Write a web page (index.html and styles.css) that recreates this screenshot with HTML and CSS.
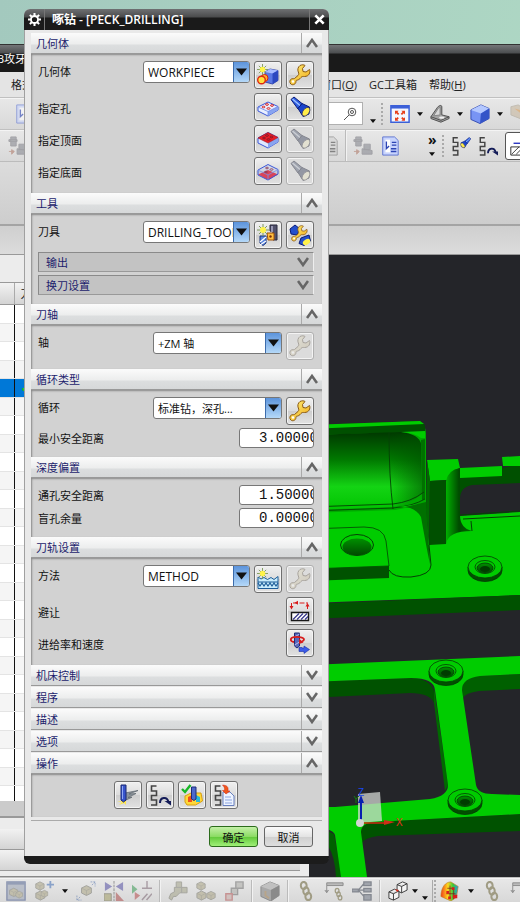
FILE: index.html
```
<!DOCTYPE html>
<html lang="zh-CN">
<head>
    <meta charset="UTF-8" />
    <meta name="viewport" content="width=device-width, initial-scale=1.0" />
    <title>啄钻 - [PECK_DRILLING]</title>
    <link rel="stylesheet" href="styles.css">
</head>
<body>

<!-- Icons -->
<svg class="sprite" aria-hidden="true">
    <defs>
        <linearGradient id="gold" x1="0" y1="0" x2="1" y2="1">
            <stop offset="0" stop-color="#fff27a" /><stop offset="1" stop-color="#f0a818" />
        </linearGradient>
        <linearGradient id="rainbow" x1="0" y1="0" x2="1" y2="0">
            <stop offset="0" stop-color="#f23a1c" /><stop offset=".4" stop-color="#ffd81c" />
            <stop offset=".7" stop-color="#38c838" /><stop offset="1" stop-color="#2898e8" />
        </linearGradient>
    </defs>
    <symbol id="up" viewBox="0 0 12 10"><path d="M1 9 6 2l5 7" fill="none" stroke="#666" stroke-width="2.600" /></symbol>
    <symbol id="down" viewBox="0 0 12 10"><path d="M1 1l5 7 5-7" fill="none" stroke="#666" stroke-width="2.600" /></symbol>
    <symbol id="tri" viewBox="0 0 8 5"><path d="M0 0h8L4 5z" fill="#111" /></symbol>
    <symbol id="star" viewBox="0 0 12 12">
        <path d="M6 0v12M0 6h12M2 2l8 8M10 2l-8 8" stroke="#7c9a58" stroke-width="1" />
        <circle cx="6" cy="6" r="3" fill="#fff34a" />
    </symbol>
    <symbol id="wrench" viewBox="0 0 22 22">
        <path d="M11 1.500c2-1 4-.8 5 0l-2.500 3 .5 3 3 .5 3.500-2.500c1.200 3-.5 7-5 7-1.500 0-2.500-.3-3.500 1-1.500 2-3 2.500-4.500 2.800-.5 0-.5 1.200-.7 2.200-.5 2-3.500 3-5 1.500s-1.300-4.500 1-5.200c1-.3 2 .2 2.700-.3L9 11.500c1-1 1-2 .3-3.500C8.300 5.500 9 3 11 1.500z" fill="url(#gold)" stroke="#8a5a14" />
        <circle cx="4" cy="17.500" r="1.200" fill="#fff" />
    </symbol>
    <symbol id="torch" viewBox="0 0 22 22">
        <path d="M2 3.500 5 1l8 6.500-4 5.500z" fill="#2d5ce0" stroke="#0a1c78" />
        <path d="M3.500 3 11 9.500" stroke="#9cc0ff" stroke-width="1.500" />
        <path d="M9 12.500 13 7.500l7.500 3.500-.5 7-6 2.500z" fill="#1a44cc" stroke="#0a1c78" />
        <ellipse cx="17" cy="15.800" rx="3" ry="5" transform="rotate(38 17 15.800)" fill="#ffec4a" stroke="#3a3a60" stroke-width=".8" />
    </symbol>
    <symbol id="newgeom" viewBox="0 0 22 22">
        <path d="M8 8l5-3 8 1.500v10L15.500 20 8 18z" fill="#5a78e4" stroke="#2436a0" stroke-width=".8" />
        <path d="M8 8l5-3 8 1.500-5.500 3z" fill="#a8bcff" /><path d="M15.500 9.500 21 6.500v10L15.500 20z" fill="#2c48c0" />
        <circle cx="7.500" cy="14" r="3.500" fill="#ffb02a" stroke="#d82010" /><circle cx="4.500" cy="16" r="3.800" fill="#ffe040" stroke="#e02810" stroke-width="1.400" />
        <use href="#star" x="0" y="0" width="11" height="11" />
    </symbol>
    <symbol id="slab" viewBox="0 0 22 22">
        <path d="M1 11 11 6l10 4.500V14l-10 6L1 15z" fill="#e8efff" stroke="#3c58d8" />
        <path d="M11 15.500 21 10.500V14l-10 6z" fill="#88a4f0" />
        <path d="M1 11l10 4.500 10-5M11 15.500V20" fill="none" stroke="#6c88e8" stroke-width=".8" />
        <g fill="#fff" stroke="#d82020"><ellipse cx="10" cy="8.500" rx="1.500" ry=".8" /><ellipse cx="15" cy="9.500" rx="1.500" ry=".8" /><ellipse cx="6.500" cy="11" rx="1.500" ry=".8" /><ellipse cx="11.500" cy="12.500" rx="1.500" ry=".8" /></g>
    </symbol>
    <symbol id="slabtop" viewBox="0 0 22 22">
        <path d="M1 10 11 4.500l10 5V14l-10 6L1 15z" fill="#dfe8ff" stroke="#3c58d8" />
        <path d="M11 15 21 9.500V14l-10 6z" fill="#88a4f0" />
        <path d="M1 10 11 4.500l10 5L11 15z" fill="#e81c24" stroke="#a01020" stroke-width=".6" />
        <g fill="none" stroke="#781828" stroke-width=".8"><ellipse cx="10" cy="7.500" rx="1.500" ry=".8" /><ellipse cx="14.500" cy="9" rx="1.500" ry=".8" /><ellipse cx="7" cy="10" rx="1.500" ry=".8" /><ellipse cx="11.500" cy="11.500" rx="1.500" ry=".8" /></g>
    </symbol>
    <symbol id="slabbottom" viewBox="0 0 22 22">
        <path d="M1 14.500 11 10l10 4.500L11 20z" fill="#ea1c24" />
        <path d="M1 10 11 4.500l10 5V14l-10 6L1 15z" fill="#a8bcf8" fill-opacity=".25" stroke="#3c58d8" />
        <path d="M1 10l10 5 10-5.500M11 15v5" fill="none" stroke="#7890e8" stroke-width=".8" />
        <g fill="none" stroke="#883858" stroke-width=".8"><ellipse cx="10" cy="8" rx="1.500" ry=".8" /><ellipse cx="14.500" cy="9.500" rx="1.500" ry=".8" /><ellipse cx="9" cy="12" rx="1.500" ry=".8" /></g>
    </symbol>
    <symbol id="newtool" viewBox="0 0 22 22">
        <path d="M3 12h6v7l-3 2.500L3 19z" fill="#5c88e0" stroke="#14307c" /><path d="M3 18l6-5M3 21l6-4" stroke="#fff" stroke-width="1.200" />
        <path d="M13 1h7v15h-4V8l-3-1z" fill="#50506c" stroke="#28283c" /><path d="M15 2v6" stroke="#b0b0cc" stroke-width="1.500" />
        <path d="M10 9h7v7h-6z" fill="#ffc040" stroke="#a05008" /><circle cx="13.500" cy="12.500" r="1.200" fill="#7c2c08" />
        <use href="#star" x="0" y="0" width="12" height="12" />
    </symbol>
    <symbol id="edittool" viewBox="0 0 22 22">
        <path d="M1 5l5-4 5 4-3 6-6-1z" fill="#2450cc" stroke="#0a1c78" />
        <path d="M12 14l8-3 1.500 6-6.500 4.500-5-2z" fill="#2450cc" stroke="#0a1c78" /><ellipse cx="17.500" cy="18" rx="4" ry="2.500" transform="rotate(-30 17.500 18)" fill="#fff14a" />
        <use href="#wrench" x="2" y="0" width="17" height="19" />
    </symbol>
    <symbol id="newmethod" viewBox="0 0 22 22">
        <path d="M1 20.500V9l3 2 3-1.500 3.500 2L14 9.500l3 2 4-3v12z" fill="#c8ecfc" stroke="#1c5c98" />
        <path d="M1 14h20M1 15l2 3 2-3 2 3 2-3 2 3 2-3 2 3 2-3 2 3 2-3" fill="none" stroke="#1c5c98" stroke-width="1.200" />
        <use href="#star" x="0" y="0" width="11" height="11" />
    </symbol>
    <symbol id="avoid" viewBox="0 0 22 22">
        <path d="M2.500 8V3H19M18.500 4v6" fill="none" stroke="#d81c1c" stroke-dasharray="5 1.500" />
        <path d="M.5 6h4L2.500 9.500zM9 .8v4L5.500 2.800zM16.500 6.500h4L18.500 3z" fill="#d81c1c" />
        <path d="M2.500 12.500h17v8h-17z" fill="#fff" stroke="#181818" stroke-width="1.400" />
        <path d="M4 19.500 10 13.500M8 19.500l6-6M12 19.500l6-6M16 19.500l3-3" stroke="#38388c" stroke-width="1.200" />
    </symbol>
    <symbol id="feed" viewBox="0 0 22 22">
        <path d="M5.500 1h5v13l-2.500 2-2.500-2z" fill="#5868bc" stroke="#202c74" /><path d="M5.500 5l5-3M5.500 13l5-3" stroke="#b4bcec" />
        <path d="M5 10C1 9.500.5 6 5 5.200c5-.8 10 .3 10 2.300 0 1-1 1.500-2 2" fill="none" stroke="#d81c1c" stroke-width="1.800" /><path d="M10 6.500v5.500l4.500-1.500z" fill="#d81c1c" />
        <path d="M10 15.500v4h5v2l5.500-4-5.500-3.500v2h-2v-.5z" fill="#3c5ce8" stroke="#1830a8" stroke-width=".6" />
    </symbol>
    <symbol id="path" viewBox="0 0 22 22">
        <path d="M7.500 2H2.500v5h5v4.500h-5v4.500h5V21H2" fill="none" stroke="#444" stroke-width="1.600" />
    </symbol>
    <symbol id="generate" viewBox="0 0 22 22">
        <use href="#path" width="22" height="22" />
        <path d="M11 19c0-6 7-7 8.500-1" fill="none" stroke="#141c58" stroke-width="2" /><path d="M15.500 17h6.500v4.500z" fill="#141c58" />
    </symbol>
    <symbol id="replay" viewBox="0 0 22 22">
        <path d="M8 9l13-2.500-9 3.500 7-.5-8 4 4-.3-7 3.300z" fill="#8c949c" stroke="#5c646c" stroke-width=".7" />
        <path d="M0 17l5 1-3 3 5-2 2 2v-4z" fill="#ffe648" />
        <path d="M4 1h5v15l-2.500 2L4 16z" fill="#3854cc" stroke="#182870" /><path d="M5.500 2v13" stroke="#90a8f4" />
    </symbol>
    <symbol id="verify" viewBox="0 0 22 22">
        <path d="M4 12l6-3h10l1.500 8-7 4H6l-2-3z" fill="#ffd838" stroke="#d8a010" />
        <path d="M7 13l4-2v7H7z" fill="#f0501c" /><path d="M15 11l4 2v5h-4z" fill="#28b8d8" />
        <path d="M10.500 3h4.500v12l-2 1.500-2.500-1.500z" fill="#4c68cc" stroke="#1c2c78" />
        <path d="M1 5l3 3 5.500-7" fill="none" stroke="#18b828" stroke-width="2.400" />
    </symbol>
    <symbol id="list" viewBox="0 0 22 22">
        <use href="#path" width="22" height="22" />
        <path d="M10 8h7l4 4v9.500H10z" fill="#eef4ff" stroke="#6880c0" /><path d="M12 13h6M12 16h7M12 19h7" stroke="#8ca4e0" />
        <path d="M9.500 1c5 .5 6 2 5.500 6h2L13 10 9.500 6.500h2C12 4 11 2.500 9.500 1z" fill="#f0581c" stroke="#d02010" stroke-width=".5" />
    </symbol>
    <symbol id="cube" viewBox="0 0 22 22">
        <path d="M1 6.500 12 1l9 4v11l-10 5.500L1 17z" fill="#7894f4" stroke="#3048b0" /><path d="M1 6.500 12 1l9 4-9 5.500z" fill="#b4c8ff" /><path d="M12 10.500 21 5v11l-10 5.500z" fill="#3454c8" />
    </symbol>
    <symbol id="graycube" viewBox="0 0 22 22">
        <path d="M1 6 11 1l10 4v11l-9 6-11-5z" fill="#a8a8a8" stroke="#888" /><path d="M1 6 11 1l10 4-9 5z" fill="#c0c0c0" /><path d="M12 10 21 5v11l-9 6z" fill="#8a8a8a" /><path d="M6 11v5l4 3" stroke="#b8a488" stroke-width="2" fill="none" />
    </symbol>
    <symbol id="fit" viewBox="0 0 22 22">
        <path d="M1 2h20v18H1z" fill="#f4f7ff" stroke="#3c60d8" stroke-width="1.600" /><path d="M1 2h20v3H1z" fill="#3c60d8" />
        <path d="M5.500 7.500h4l-1.300 1.300 2 2-1.400 1.400-2-2-1.300 1.300zM16.500 7.500h-4l1.300 1.300-2 2 1.400 1.400 2-2 1.300 1.300zM5.500 18.500h4l-1.300-1.300 1.500-1.500-1.400-1.400-1.500 1.500-1.300-1.300zM16.500 18.500h-4l1.300-1.300-1.500-1.500 1.400-1.400 1.500 1.500 1.300-1.300z" fill="#e8401c" />
    </symbol>
    <symbol id="orient" viewBox="0 0 22 22">
        <path d="M1 14 8 4c2-3 5-3 5-1v9l8 2v2l-9 4-11-4z" fill="#a4a4a4" stroke="#484848" /><path d="M4 13 9 5l2-2v9z" fill="#d8d8d8" stroke="#686868" stroke-width=".7" /><path d="M1 14l11 4 9-4" fill="none" stroke="#484848" /><ellipse cx="13" cy="15" rx="3" ry="1.200" fill="#eee" />
    </symbol>
    <symbol id="doc" viewBox="0 0 22 22">
        <path d="M3 1h13l4 4v16H3z" fill="#c8d4fc" stroke="#5870d0" /><path d="M6 4h5v14H6z" fill="#fff" /><path d="M7 6v8l3-3M13 7h5M13 10h5M12 14h6M12 17h6" stroke="#2c44b4" stroke-width="1.500" fill="none" />
    </symbol>
    <symbol id="tools" viewBox="0 0 22 22">
        <path d="M3 1h6v10H3zM1 4h9v2H1zM12 9h7v6h-7zM10 14l11 2v4H10z" fill="#8a8c94" stroke="#787880" /><path d="M1 17h5M4 15l3 2-3 3z" fill="#b07c6c" stroke="#b07c6c" />
    </symbol>
    <symbol id="section" viewBox="0 0 22 22">
        <path d="M1 3l8-2 12 8v11L1 12z" fill="#c8b8a0" stroke="#a8a090" /><path d="M5 5l16 12V9z" fill="#d89850" />
    </symbol>
    <symbol id="pathtorch" viewBox="0 0 22 22">
        <use href="#path" width="22" height="22" /><g transform="matrix(-1 0 0 1 23 1)"><use href="#torch" width="13" height="13" /></g>
    </symbol>
    <symbol id="hatch" viewBox="0 0 22 22">
        <path d="M5 8h17" stroke="#2430c0" stroke-width="1.500" /><path d="M2 12h20v9H2z" fill="#fff" stroke="#222" /><path d="M3 20l8-8M8 20l8-8M13 20l8-8" stroke="#333" />
    </symbol>
    <symbol id="block" viewBox="0 0 12 12">
        <path d="M1 3.500 6 1l5 2.500v5L6 11 1 8.500z" fill="#b0aa8c" stroke="#7c7c74" /><path d="M1 3.500 6 6l5-2.500M6 6v5" fill="none" stroke="#8c8a78" stroke-width=".8" />
    </symbol>
    <symbol id="parts" viewBox="0 0 22 22">
        <use href="#block" x="0" y="0" width="11" height="11" /><use href="#block" x="0" y="10" width="12" height="12" /><use href="#block" x="11" y="10" width="11" height="12" />
    </symbol>
    <symbol id="framed" viewBox="0 0 22 22">
        <path d="M1 1h20v20H1z" fill="#a0a8b8" stroke="#506090" stroke-width="1.500" /><path d="M1 1h20v3H1z" fill="#607098" />
        <use href="#block" x="3" y="6" width="11" height="13" /><use href="#block" x="10" y="10" width="9" height="10" />
    </symbol>
    <symbol id="addpart" viewBox="0 0 22 22">
        <use href="#block" x="1" y="0" width="11" height="11" /><use href="#block" x="1" y="10" width="12" height="12" /><use href="#block" x="7" y="9" width="9" height="10" />
        <path d="M18 0v8M14 4h8" stroke="#5078b8" stroke-width="2" />
    </symbol>
    <symbol id="move" viewBox="0 0 22 22"><use href="#block" x="5" y="4" width="13" height="13" /><path d="M1 16v5h5M1 21l4-4M16 1h5v5M21 1l-4 4" fill="none" stroke="#5878b0" stroke-dasharray="2 1" /></symbol>
    <symbol id="mirror" viewBox="0 0 22 22"><path d="M1 1l8 5-8 5zM21 1l-8 5 8 5z" fill="#605ca8" /><path d="M11 0v22" stroke="#555" stroke-dasharray="3 1" /><path d="M0 14h8v8H0z" fill="#a8a470" stroke="#706c5c" /><path d="M13 12l9 10h-9z" fill="#b05858" /></symbol>
    <symbol id="constrain" viewBox="0 0 22 22"><path d="M0 4l6 5-6 5z" fill="#48a060" /><path d="M3 12l6 4-6 5z" fill="#b85858" /><path d="M11 8h11M16.500 0v8M11 21l6-7M16 21l6-7" stroke="#84707c" stroke-width="1.600" /></symbol>
    <symbol id="asm" viewBox="0 0 22 22"><path d="M9 1h6v6h6v6h-8l-4 4H6l-2 4-3-2 2-5 4-2V7h2z" fill="#a8a890" stroke="#7c7c70" /><path d="M9 7h6v6" fill="none" stroke="#80807c" /></symbol>
    <symbol id="steps" viewBox="0 0 22 22"><path d="M13 1h8v7h-8zM8 8h7v7H8z" fill="#b0b0ac" stroke="#777" stroke-width="1.500" /><path d="M2 14h7v7H2z" fill="#c8b0ac" stroke="#b86060" stroke-width="1.500" /></symbol>
    <symbol id="chain" viewBox="0 0 22 22"><g fill="none" stroke="#a09c84" stroke-width="2.200"><ellipse cx="8.500" cy="5" rx="3.200" ry="4" /><ellipse cx="11" cy="11" rx="3" ry="4" /><ellipse cx="13.500" cy="17" rx="3.200" ry="4" /></g></symbol>
    <symbol id="rule" viewBox="0 0 22 22"><path d="M3 2h18v3H3zM3 5v7M1 10l2 3 2-3" fill="#bbb" stroke="#8a8a8a" /><g transform="translate(9 7)"><use href="#chain" width="14" height="15" /></g></symbol>
    <symbol id="tree" viewBox="0 0 22 22"><path d="M13 1h8v4h-8zM13 8h8v4h-8zM13 15h8v6h-8zM0 9h7v3H0zM7 10l6-7M7 10h6M7 10l6 7" fill="#a0a4ac" stroke="#848890" stroke-width="1.400" /></symbol>
    <symbol id="boxes" viewBox="0 0 22 22"><g fill="#f4f4f4" stroke="#333"><path d="M10 4l6-3 5 2v7l-6 3-5-2zM10 4l5 2 6-3M15 6v7" /><path d="M1 12l6-3 5 2v7l-6 3-5-2zM1 12l5 2 6-3M6 14v7" /></g><path d="M8 9l4 1-2 2z" fill="#e02c1c" /></symbol>
    <symbol id="analysis" viewBox="0 0 22 22"><path d="M1 17C1 7 6 1 12 1l8 5-2 12-6 4z" fill="url(#rainbow)" stroke="#c08018" stroke-width=".7" /><path d="M8 8h6M11 5v14M7 14h10M15 10v10" stroke="#801c1c" stroke-width=".8" /><path d="M7 11h3v3H7zM13 7h3v3h-3zM14 15h5v4h-5zM9 17h3v3H9z" fill="#d81c1c" /></symbol>
</svg>

<div class="desktop">
    <div class="app">
        <div class="app-title">B攻牙</div>
        <nav class="split menu">
            <div><a href="#">格式</a></div>
            <div>
                <a href="#">窗口(<u>O</u>)</a>
                <a href="#">GC工具箱</a>
                <a href="#">帮助(<u>H</u>)</a>
            </div>
        </nav>
        <div class="split toolbar">
            <div class="faded"><svg class="icon"><use href="#doc" /></svg></div>
            <div>
                <label class="search">
                    <input type="text" aria-label="查找命令">
                    <svg viewBox="0 0 14 14"><circle cx="9" cy="5" r="3.800" /><circle cx="9" cy="5" r="1.500" /><path d="M6 8l-5 5" /></svg>
                </label>
                <svg class="drop low"><use href="#tri" /></svg>
                <span class="grip"></span>
                <svg class="icon"><use href="#fit" /></svg>
                <svg class="drop"><use href="#tri" /></svg>
                <svg class="icon"><use href="#orient" /></svg>
                <svg class="drop"><use href="#tri" /></svg>
                <svg class="icon"><use href="#cube" /></svg>
                <svg class="drop"><use href="#tri" /></svg>
                <svg class="icon faded"><use href="#section" /></svg>
            </div>
        </div>
        <div class="split toolbar second">
            <div class="faded"><svg class="icon"><use href="#tools" /></svg></div>
            <div>
                <svg class="icon gray"><use href="#doc" /></svg>
                <span class="sep"></span>
                <svg class="icon faded"><use href="#tools" /></svg>
                <svg class="icon"><use href="#doc" /></svg>
                <span class="more">»<svg class="drop"><use href="#tri" /></svg></span>
                <span class="grip"></span>
                <svg class="icon"><use href="#pathtorch" /></svg>
                <svg class="icon"><use href="#generate" /></svg>
                <span class="pressed"><svg class="icon"><use href="#hatch" /></svg></span>
            </div>
        </div>
        <div class="ribbon"></div>
        <div class="strip"></div>
        <div class="split workspace">
            <div class="navigator">
                <div class="nav-title"></div>
                <div class="nav-list">
                    <table>
                        <thead><tr><th></th><th>刀</th></tr></thead>
                        <tbody id="operations"></tbody>
                    </table>
                </div>
                <div class="nav-scroll"></div>
                <div class="nav-panel"></div>
                <div class="nav-panel"></div>
            </div>
            <svg class="viewport" viewBox="309 255 211 622" preserveAspectRatio="xMinYMin slice">
                <defs>
                    <linearGradient id="pocket" x1="0" y1="0" x2="0" y2="1">
                        <stop offset="0" stop-color="#003800" /><stop offset=".35" stop-color="#007800" />
                        <stop offset=".7" stop-color="#14d414" /><stop offset="1" stop-color="#00c400" />
                    </linearGradient>
                    <linearGradient id="fillet"><stop offset="0" stop-color="#00b000" /><stop offset=".5" stop-color="#004a00" /><stop offset="1" stop-color="#006800" /></linearGradient>
                    <linearGradient id="edge"><stop offset="0" stop-color="#005000" stop-opacity="0" /><stop offset="1" stop-color="#005000" /></linearGradient>
                    <linearGradient id="bore" x1="0" y1="0" x2="0" y2="1"><stop offset="0" stop-color="#009000" /><stop offset="1" stop-color="#004800" /></linearGradient>
                    <g id="boss" stroke="#063806" stroke-width=".8">
                        <path d="M-17 0v3.500a17 11 0 0 0 34 0V0z" fill="#005000" />
                        <ellipse rx="17" ry="11" fill="#00cc00" />
                        <ellipse rx="10" ry="6.500" fill="#00cc00" />
                        <ellipse cy="1" rx="8" ry="5" fill="url(#bore)" />
                        <ellipse cy="2" rx="5" ry="3" fill="#003c00" stroke="none" />
                    </g>
                </defs>
                <rect x="309" y="255" width="2000" height="2000" fill="#242529" />
                <!-- upper bracket -->
                <path d="M309 509l86-2 27-20 7 58 18-8 13-21 60-4v83l-211 8z" fill="#00cc00" />
                <path d="M309 604l211-9v15l-211 9z" fill="#005200" />
                <path d="M309 426l111-5q5 3 6 12v71l-31 6-86 3z" fill="#00a800" />
                <path d="M309 425l111-4 5 4v7l-116 3z" fill="#005000" /><path d="M309 425l111-4 4 3-115 5z" fill="#00cc00" />
                <path d="M309 435l92-3q18 2 20 12l1 50q-12 11-30 13l-83 3z" fill="url(#pocket)" />
                <path d="M390 433q29 0 31 11l1 50q-12 11-30 13z" fill="url(#edge)" opacity=".6" />
                <path d="M401 432l24-1v7h-4q-6-5-20-6z" fill="#00cc00" />
                <path d="M421 440l4-1v60l-3 1z" fill="#007000" />
                <path d="M389 432q0 45 4 77M309 507l84-3q18-2 31-12M309 511l84-3q20-2 32-9" fill="none" stroke="#064006" stroke-width=".9" />
                <path d="M309 512l90-5 26-4 4 42-1 22-8-50q-4-11-20-10z" fill="#00cc00" />
                <path d="M405 507l21-5 4 62q-2-8-9-47-5-9-16-10z" fill="#007000" />
                <path d="M427 460l31-1 2 9q-12 4-13 12l-17 1z" fill="#00cc00" />
                <path d="M427 460l3 21-1 64-3-35z" fill="#006800" />
                <path d="M430 481l17-1-1 64-17 1z" fill="#005000" />
                <path d="M446 481q2-11 14-13v47q0 13 12 16-24 0-26 13z" fill="url(#fillet)" />
                <path d="M460 478l60-14v19l-48 2q-12 2-12 14z" fill="#005000" />
                <path d="M460 468l42-2v10l-42 2zM502 457l18-1v10l-17 0z" fill="#00cc00" />
                <path d="M460 515l60-4M463 519l57-3M472 531l-1-10" stroke="#064006" fill="none" />
                <path d="M309 529l55-2q20 0 22 14l3 25-80 3z" fill="#00cc00" stroke="#064006" stroke-width=".8" />
                <path d="M309 569l80-3v12l-80 3z" fill="#005200" />
                <path d="M389 570q4 8 22 7 20-2 20-12l-2-20" fill="none" stroke="#064006" />
                <ellipse cx="357" cy="545" rx="16.500" ry="10.500" fill="#00cc00" stroke="#064006" />
                <ellipse cx="357" cy="547" rx="14.500" ry="8.500" fill="url(#bore)" />
                <use href="#boss" x="485" y="567" />
                <!-- lower frame -->
                <path d="M309 682l101-4q25 0 26 22l-2 3q-4-10-24-10l-101 5z" fill="#005200" />
                <path d="M434 688l14 97-3 6-11-88z" fill="#006a00" />
                <path d="M462 690q0-14 18-14l40-2v15l-41 2q-14 2-16 7z" fill="#006000" />
                <path d="M361 832q0-9 14-10l145-8v17l-142 5q-14 2-16 7z" fill="#005200" />
                <path d="M309 822l25 12 8 43h-6q-2-40-27-44z" fill="#006000" />
                <path d="M309 665l211-9v18l-40 2q-18 2-18 14l14 95q2 9 16 9l28 1v19l-145 8q-14 1-14 10l6 45h-26l-6-42q-2-7-26-9v-19l26 0 95-8q18-3 18-14l-13-95q-1-12-24-12l-102 4z" fill="#00cc00" />
                <use href="#boss" x="446" y="671" />
                <use href="#boss" x="465" y="800" />
                <!-- view axes -->
                <path d="M358 794l22-2 2 29-24 2z" fill="#d8dcd8" fill-opacity=".72" />
                <path d="M361 822v-22" stroke="#0820b0" stroke-width="2" /><path d="M358 803l3-8 3 8z" fill="#0820b0" />
                <path d="M361 823h26" stroke="#d02810" stroke-width="1.500" /><path d="M384 820l11 2-11 3z" fill="#d03018" />
                <circle cx="360" cy="823" r="4" fill="#d4d4d4" />
                <path d="M354 796l2 3 3-3M356 799v4" fill="none" stroke="#108010" />
                <text x="358" y="796" fill="#1848f0">Z</text><text x="396" y="826" fill="#e83020">X</text>
            </svg>
        </div>
        <div class="toolbar bottom">
            <svg class="icon faded"><use href="#framed" /></svg>
            <svg class="icon faded"><use href="#addpart" /></svg>
            <svg class="drop"><use href="#tri" /></svg>
            <svg class="icon faded"><use href="#move" /></svg>
            <svg class="icon faded"><use href="#mirror" /></svg>
            <svg class="icon faded"><use href="#constrain" /></svg>
            <span class="sep"></span>
            <svg class="icon faded"><use href="#asm" /></svg>
            <svg class="icon faded"><use href="#parts" /></svg>
            <svg class="icon faded"><use href="#steps" /></svg>
            <span class="sep"></span>
            <svg class="icon"><use href="#graycube" /></svg>
            <span class="sep"></span>
            <svg class="icon"><use href="#chain" /></svg>
            <svg class="icon"><use href="#rule" /></svg>
            <svg class="icon"><use href="#tree" /></svg>
            <span class="sep"></span>
            <div class="cluster">
                <svg class="icon"><use href="#boxes" /></svg>
                <svg class="drop"><use href="#tri" /></svg>
                <svg class="drop low"><use href="#tri" /></svg>
                <span class="grip"></span>
                <svg class="icon"><use href="#analysis" /></svg>
            </div>
            <svg class="drop"><use href="#tri" /></svg>
            <svg class="icon"><use href="#chain" /></svg>
            <svg class="icon"><use href="#rule" /></svg>
        </div>
    </div>

    <form class="dialog">
        <div class="dialog-title">
            <button type="button" aria-label="设置">
                <svg viewBox="0 0 14 14"><circle cx="7" cy="7" r="3.800" fill="none" stroke="#fff" stroke-width="2" /><path d="M7 0v3M7 11v3M0 7h3M11 7h3M2 2l2 2M10 10l2 2M12 2l-2 2M4 10l-2 2" stroke="#fff" stroke-width="2.200" /></svg>
            </button>
            <h1>啄钻 - [PECK_DRILLING]</h1>
            <button type="button" aria-label="关闭">
                <svg viewBox="0 0 14 14"><path d="M2.500 2.500l9 9M11.500 2.500l-9 9" stroke="#fff" stroke-width="2.800" /></svg>
            </button>
        </div>

        <div class="dialog-body">
            <button type="button" class="head"><span>几何体</span><svg><use href="#up" /></svg></button>
            <div class="section">
                <div class="row">
                    <label for="geometry">几何体</label>
                    <div class="combo"><select id="geometry"><option>WORKPIECE</option></select><svg><use href="#tri" /></svg></div>
                    <button type="button" class="tool" aria-label="新建几何体"><svg><use href="#newgeom" /></svg></button>
                    <button type="button" class="tool" aria-label="编辑几何体"><svg><use href="#wrench" /></svg></button>
                </div>
                <div class="row plain">
                    <span>指定孔</span>
                    <button type="button" class="tool" aria-label="指定孔"><svg><use href="#slab" /></svg></button>
                    <button type="button" class="tool" aria-label="显示孔"><svg><use href="#torch" /></svg></button>
                </div>
                <div class="row plain">
                    <span>指定顶面</span>
                    <button type="button" class="tool" aria-label="指定顶面"><svg><use href="#slabtop" /></svg></button>
                    <button type="button" class="tool" aria-label="显示顶面" disabled><svg><use href="#torch" /></svg></button>
                </div>
                <div class="row plain">
                    <span>指定底面</span>
                    <button type="button" class="tool" aria-label="指定底面"><svg><use href="#slabbottom" /></svg></button>
                    <button type="button" class="tool" aria-label="显示底面" disabled><svg><use href="#torch" /></svg></button>
                </div>
            </div>

            <button type="button" class="head"><span>工具</span><svg><use href="#up" /></svg></button>
            <div class="section tight">
                <div class="row">
                    <label for="tool">刀具</label>
                    <div class="combo"><select id="tool"><option>DRILLING_TOOL</option></select><svg><use href="#tri" /></svg></div>
                    <button type="button" class="tool" aria-label="新建刀具"><svg><use href="#newtool" /></svg></button>
                    <button type="button" class="tool" aria-label="编辑刀具"><svg><use href="#edittool" /></svg></button>
                </div>
                <button type="button" class="subhead"><span>输出</span><svg><use href="#down" /></svg></button>
                <button type="button" class="subhead"><span>换刀设置</span><svg><use href="#down" /></svg></button>
            </div>

            <button type="button" class="head"><span>刀轴</span><svg><use href="#up" /></svg></button>
            <div class="section tight">
                <div class="row">
                    <label for="axis">轴</label>
                    <div class="combo wide"><select id="axis"><option>+ZM 轴</option></select><svg><use href="#tri" /></svg></div>
                    <button type="button" class="tool" aria-label="编辑刀轴" disabled><svg><use href="#wrench" /></svg></button>
                </div>
            </div>

            <button type="button" class="head"><span>循环类型</span><svg><use href="#up" /></svg></button>
            <div class="section tight">
                <div class="row">
                    <label for="cycle">循环</label>
                    <div class="combo wide"><select id="cycle"><option>标准钻，深孔...</option></select><svg><use href="#tri" /></svg></div>
                    <button type="button" class="tool" aria-label="编辑参数"><svg><use href="#wrench" /></svg></button>
                </div>
                <div class="row"><label for="clearance">最小安全距离</label><input id="clearance" type="text" value="3.00000"></div>
            </div>

            <button type="button" class="head"><span>深度偏置</span><svg><use href="#up" /></svg></button>
            <div class="section tight">
                <div class="row"><label for="through">通孔安全距离</label><input id="through" type="text" value="1.50000"></div>
                <div class="row"><label for="blind">盲孔余量</label><input id="blind" type="text" value="0.00000"></div>
            </div>

            <button type="button" class="head"><span>刀轨设置</span><svg><use href="#up" /></svg></button>
            <div class="section">
                <div class="row">
                    <label for="method">方法</label>
                    <div class="combo"><select id="method"><option>METHOD</option></select><svg><use href="#tri" /></svg></div>
                    <button type="button" class="tool" aria-label="新建方法"><svg><use href="#newmethod" /></svg></button>
                    <button type="button" class="tool" aria-label="编辑方法" disabled><svg><use href="#wrench" /></svg></button>
                </div>
                <div class="row plain">
                    <span>避让</span>
                    <button type="button" class="tool" aria-label="避让"><svg><use href="#avoid" /></svg></button>
                </div>
                <div class="row plain">
                    <span>进给率和速度</span>
                    <button type="button" class="tool" aria-label="进给率和速度"><svg><use href="#feed" /></svg></button>
                </div>
            </div>

            <button type="button" class="head"><span>机床控制</span><svg><use href="#down" /></svg></button>
            <button type="button" class="head"><span>程序</span><svg><use href="#down" /></svg></button>
            <button type="button" class="head"><span>描述</span><svg><use href="#down" /></svg></button>
            <button type="button" class="head"><span>选项</span><svg><use href="#down" /></svg></button>
            <button type="button" class="head"><span>操作</span><svg><use href="#up" /></svg></button>
            <div class="section actions">
                <button type="button" class="tool" aria-label="重播"><svg><use href="#replay" /></svg></button>
                <button type="button" class="tool" aria-label="生成"><svg><use href="#generate" /></svg></button>
                <button type="button" class="tool" aria-label="确认"><svg><use href="#verify" /></svg></button>
                <button type="button" class="tool" aria-label="列表"><svg><use href="#list" /></svg></button>
            </div>
            <div class="dialog-foot">
                <button type="submit" class="btn ok">确定</button>
                <button type="button" class="btn">取消</button>
            </div>
        </div>
    </form>
</div>

<script>
    // Operation list: only the selected row has a tool path
    const tbody = document.getElementById("operations");
    for (let i = 0; i < 27; i++) {
      const row = document.createElement("tr");
      row.innerHTML = `<td></td><td>${i === 4 ? "✔" : ""}</td>`;
      if (i === 4) row.className = "selected";
      tbody.appendChild(row);
    }
</script>
</body>
</html>
```
FILE: styles.css
```
* {
  box-sizing: border-box;
}
body {
  margin: 0;
  font-family: "Open Sans", "Noto Sans CJK SC", sans-serif;
  font-size: 11px;
  color: #111;
}
button, select, input {
  font: inherit;
  color: inherit;
  margin: 0;
  padding: 0;
}
.sprite {
  position: absolute;
  width: 0;
  height: 0;
}
.desktop {
  position: relative;
  min-height: 100vh;
  padding-top: 44px;
  display: flex;
  flex-direction: column;
  overflow: hidden;
  background: linear-gradient(100deg, #a3c9be, #b0dac5);
}

/* Application window */
.app {
  flex: 1;
  display: flex;
  flex-direction: column;
  min-width: 0;
  background: #d6d6d6;
}
.app-title {
  height: 28px;
  line-height: 28px;
  color: #fff;
  text-indent: -3px;
  border-top: 1px solid #333;
  background: linear-gradient(#747678, #4c4e50 8px, #1a1a1a 9px, #1a1a1a);
}
.split {
  display: grid;
  grid-template-columns: 309px minmax(0, 1fr);
}
.menu {
  height: 25px;
  line-height: 25px;
  font-size: 11px;
  background: #e4e4e4;
}
.menu > div {
  display: flex;
  gap: 12px;
  padding-left: 11px;
  white-space: nowrap;
}
.menu a {
  color: #222;
  text-decoration: none;
}
.toolbar {
  height: 32px;
  border-top: 1px solid #c0c0c0;
  box-shadow: inset 0 1px #f4f4f4;
  background: linear-gradient(#e8e8e8, #d8d8d8);
  overflow: hidden;
}
.toolbar > div {
  display: flex;
  align-items: center;
  gap: 7px;
}
.toolbar > div:first-child {
  padding-left: 14px;
}
.second > div:last-child {
  padding-left: 10px;
}
.second > div:first-child {
  padding-left: 8px;
}
.icon {
  width: 20px;
  height: 20px;
  flex: none;
}
.faded {
  opacity: 0.6;
}
.gray {
  filter: grayscale(1);
  opacity: 0.6;
}
.drop {
  width: 6px;
  height: 4px;
  flex: none;
}
.low {
  margin-top: 14px;
}
.sep {
  width: 2px;
  align-self: stretch;
  flex: none;
  margin: 0 -1px;
  border-left: 1px solid #bbb;
  border-right: 1px solid #f2f2f2;
}
.grip {
  width: 4px;
  height: 22px;
  flex: none;
  margin-left: -4px;
  border-right: 2px dotted #aaa;
}
.search {
  display: flex;
  align-items: center;
  width: 54px;
  height: 23px;
  flex: none;
  padding-right: 5px;
  background: #fff;
  border: 1px solid #b0b0b0;
}
.search input {
  flex: 1;
  width: 20px;
  border: 0;
  background: none;
}
.search svg {
  width: 14px;
  height: 14px;
  fill: none;
  stroke: #555;
}
.more {
  display: flex;
  flex-direction: column;
  align-items: center;
  gap: 7px;
  width: 10px;
  margin-left: 21px;
  font-size: 14px;
  line-height: 10px;
  font-weight: bold;
}
.pressed {
  display: flex;
  padding: 3px;
  border: 1px solid #555;
  border-radius: 3px;
  background: #fff;
}
.ribbon {
  height: 63px;
  border-top: 1px solid #bcbcbc;
  background: linear-gradient(#dcdcdc, #cdcdcd);
}
.strip {
  height: 31px;
  border-top: 2px solid #a4a4a4;
  border-bottom: 1px solid #999;
  background: linear-gradient(#cfcfcf, #dcdcdc);
}
.workspace {
  flex: 1;
  min-height: 0;
}
.navigator {
  display: flex;
  flex-direction: column;
  min-height: 0;
  background: #ececec;
  border-bottom: 1px solid #888;
}
.nav-title {
  height: 28px;
  border-bottom: 1px solid #999;
}
.nav-list {
  flex: 1 1 0;
  min-height: 0;
  overflow: hidden;
  background: #fff;
}
.nav-list table {
  width: 100%;
  border-collapse: collapse;
  table-layout: fixed;
}
.nav-list th {
  height: 21px;
  padding: 0 0 0 6px;
  text-align: left;
  font-weight: normal;
  background: linear-gradient(#f2f2f2, #d4d4d4);
  border-bottom: 1px solid #999;
}
.nav-list th:first-child {
  width: 14px;
  padding: 0;
  border-right: 1px solid #aaa;
}
.nav-list td {
  height: 19px;
  padding: 0 0 0 6px;
  line-height: 16px;
  color: #2dc82d;
  border-bottom: 1px solid #e4e4e4;
}
.nav-list tr:nth-child(even) td {
  height: 18px;
  background: #f5f5f5;
}
.nav-list td:first-child {
  padding: 0;
  border-right: 1px solid #111;
}
.nav-list .selected td {
  background: #0078d7;
}
.nav-scroll {
  height: 28px;
  border-bottom: 11px solid #ececec;
  box-shadow: inset 0 -2px #999;
  background: #cbcbcb;
}
.nav-panel {
  height: 21px;
  margin-right: 9px;
  border-bottom: 1px solid #999;
  background: linear-gradient(#f2f2f2, #d4d4d4);
}
.nav-panel:last-child {
  margin-bottom: 5px;
}
.viewport {
  width: 100%;
  height: 100%;
  min-height: 0;
  font-family: "Liberation Sans", sans-serif;
  font-size: 10px;
}
.bottom {
  display: flex;
  align-items: center;
  gap: 8px;
  height: 25px;
  padding: 2px 0 0 6px;
}
.bottom > .cluster {
  gap: 4px;
}
.bottom .grip {
  margin-left: 0;
  border-left: 1px solid #aaa;
}

/* Dialog floating over the application */
.dialog {
  position: absolute;
  top: 9px;
  left: 24px;
  width: 305px;
  border-radius: 6px;
  overflow: hidden;
  background: #e9e9e9;
  border-bottom: 8px solid #1c1c1c;
}
.dialog-title {
  display: flex;
  align-items: center;
  height: 21px;
  background: linear-gradient(#6e7072, #4a4b4c 8px, #1a1a1a 9px, #1a1a1a);
}
.dialog-title h1 {
  flex: 1;
  margin: 0;
  padding-left: 7px;
  font-size: 12px;
  line-height: 20px;
  font-weight: 600;
  color: #fff;
}
.dialog-title button {
  display: flex;
  align-items: center;
  justify-content: center;
  width: 20px;
  height: 21px;
  border: 0;
  background: none;
}
.dialog-title button:first-child {
  width: 21px;
  border-right: 1px solid #777;
}
.dialog-title button:last-child {
  border-left: 1px solid #777;
}
.dialog-title svg {
  width: 13px;
  height: 13px;
}
.dialog-body {
  padding: 3px 6px 9px;
  border: solid #a0a0a0;
  border-width: 0 1px;
}
.head {
  display: flex;
  align-items: center;
  width: 100%;
  height: 21px;
  padding-left: 5px;
  border: 0;
  border-bottom: 1px solid #999;
  color: #1c1c6c;
  background: linear-gradient(#fbfbfb, #eceded 11px, #dcdedf 12px, #d6d8d9);
}
.head + .head {
  margin-top: 1px;
}
.head span, .subhead span {
  flex: 1;
  text-align: left;
}
.head svg {
  width: 21px;
  height: 20px;
  padding: 5px 4px;
  border-left: 1px solid #aaa;
}
.section {
  display: flex;
  flex-direction: column;
  gap: 4px;
  padding: 7px 8px 8px 7px;
  background: #d2d2d2;
  box-shadow: inset 1px 1px 2px #888;
}
.tight {
  gap: 3px;
  padding-bottom: 9px;
}
.row {
  display: flex;
  align-items: flex-start;
  gap: 4px;
}
.row label, .row span {
  flex: 1;
  line-height: 22px;
}
.row label {
  margin-bottom: -2px;
}
.plain span {
  padding-top: 5px;
}
.combo {
  display: grid;
  width: 107px;
  height: 22px;
  border: 1px solid #777;
  border-radius: 3px;
  overflow: hidden;
  background: #fff;
}
.wide {
  width: 129px;
}
.combo select, .combo svg {
  grid-area: 1 / 1;
}
.combo select {
  width: 100%;
  min-width: 0;
  height: 20px;
  padding: 0 16px 0 4px;
  border: 0;
  appearance: none;
  background: none;
  font-size: 12px;
}
.wide select {
  font-size: 11px;
}
.combo svg {
  justify-self: end;
  width: 16px;
  height: 20px;
  padding: 6px 2px;
  border-left: 1px solid #3c6cac;
  background: linear-gradient(#5c94dc, #b4d8f8);
  pointer-events: none;
}
.row input {
  width: 75px;
  height: 20px;
  padding: 0 0 0 19px;
  border: 1px solid #777;
  border-radius: 3px;
  background: #fff;
  font: 14px "Liberation Mono", monospace;
}
.tool {
  display: flex;
  align-items: center;
  justify-content: center;
  width: 28px;
  height: 28px;
  flex: none;
  border: 1px solid #707070;
  border-radius: 3px;
  box-shadow: inset 0 0 0 1px #f4f4f4;
  background: linear-gradient(#f0f0f0, #dcdcdc 50%, #cecece 51%, #e2e2e2);
}
.tool svg {
  width: 22px;
  height: 22px;
}
.tool:disabled {
  border-color: #b0b0b0;
  background: #dcdcdc;
}
.tool:disabled svg {
  filter: grayscale(0.8);
  opacity: 0.45;
}
.subhead {
  display: flex;
  align-items: center;
  height: 20px;
  padding: 0 4px 0 7px;
  border: 1px solid #8a8a8a;
  border-right-color: #eee;
  border-bottom-color: #999;
  color: #1c1c6c;
  background: #c3c3c3;
}
.subhead svg {
  width: 12px;
  height: 10px;
}
.actions {
  flex-direction: row;
  justify-content: center;
}
.dialog-foot {
  display: flex;
  justify-content: flex-end;
  gap: 6px;
  margin-top: 3px;
  padding: 5px 9px 0 0;
  border-top: 1px solid #aaa;
}
.btn {
  width: 49px;
  height: 21px;
  border: 1px solid #666;
  border-radius: 3px;
  background: linear-gradient(#fafafa, #e4e4e4 50%, #cfcfcf 51%, #dedede);
}
.ok {
  border-color: #2c6c1c;
  background: linear-gradient(#c4f0a8, #8cdc64 50%, #60c838 51%, #a0f078);
}
```
